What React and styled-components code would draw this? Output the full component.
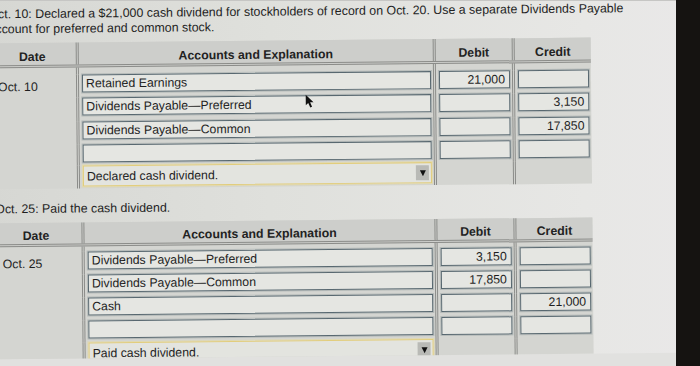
import React from "react";
import styled, { createGlobalStyle } from "styled-components";

const GlobalStyle = createGlobalStyle`
  *, *::before, *::after { box-sizing: border-box; }
  html, body { margin: 0; padding: 0; }
  body {
    background: #e0e0de;
    font-family: "Liberation Sans", Arial, sans-serif;
    color: #1f1f1f;
    overflow: hidden;
  }
`;

const Monitor = styled.div`
  display: flex;
  width: 700px;
  height: 366px;
  overflow: hidden;
`;

const Display = styled.div`
  flex: 1;
  overflow: hidden;
  background: #e1e1df;
  border-top: 1px solid #c6c6c4;
`;

const Bezel = styled.div`
  width: 24px;
  background: #151311;
`;

// the page itself, tilted a touch like the monitor
const Page = styled.div`
  position: relative;
  width: 700px;
  height: 365px;
  margin: -10px 0 0 -10px;
  padding-top: 10px;
  overflow: hidden;
  background: linear-gradient(90deg, #d6d7d3 0%, #dfe0dc 40%, #e7e7e5 85%, #e9e8e8 100%);
  transform: rotate(-0.55deg);
  transform-origin: 350px 192px;
`;

const Prompt = styled.p`
  margin: ${(p) => p.$top}px 0 0;
  padding-left: ${(p) => p.$left || 0}px;
  font-size: 12.4px;
  line-height: 15px;
  white-space: nowrap;
`;

const Journal = styled.div`
  width: 602px;
  margin-top: ${(p) => p.$top}px;
  background: #d4d5d1;
`;

const Row = styled.div`
  display: grid;
  grid-template-columns: ${(p) => p.$cols};
  height: ${(p) => p.$h}px;

  & > * + * {
    border-left: 3px double #8b8c89;
  }
`;

const HeadRow = styled(Row)`
  background: #cdcecb;
  border-bottom: 3px double #8b8c89;
`;

const HeadCell = styled.div`
  display: flex;
  align-items: center;
  justify-content: center;
  padding-top: 5px;
  font-size: 12.3px;
  font-weight: bold;
  color: #222;
`;

const Cell = styled.div`
  min-width: 0;
  padding: 0 2px 0 3px;
`;

const DateCell = styled.div`
  padding: 5px 0 0 ${(p) => p.$inset}px;
  font-size: 12.3px;
  line-height: 14px;
  white-space: nowrap;
`;

const Field = styled.div`
  height: 18px;
  padding: 0 4px 0 3px;
  border: 1px solid #586870;
  box-shadow: 0 0 0 1px rgba(110, 125, 130, 0.3);
  background: #e5e6e2;
  font-size: 12.3px;
  line-height: 16px;
  text-align: ${(p) => (p.$num ? "right" : "left")};
  white-space: nowrap;
  overflow: hidden;
`;

const Note = styled.div`
  display: flex;
  align-items: center;
  justify-content: space-between;
  height: 21px;
  padding: 0 2px 0 3px;
  border: 1px solid #e2cd7c;
  box-shadow: 0 0 0 1px rgba(240, 222, 140, 0.45);
  background: #e3e4df;
  font-size: 12.3px;
  white-space: nowrap;
`;

const Drop = styled.span`
  display: flex;
  align-items: center;
  justify-content: center;
  width: 13px;
  height: 15px;
  background: #b9bab6;

  &::after {
    content: "";
    border-left: 3.5px solid transparent;
    border-right: 3.5px solid transparent;
    border-top: 6px solid #111;
  }
`;

const Pointer = styled.svg`
  position: absolute;
  left: 316px;
  top: 103px;
  width: 9px;
  height: 14px;
`;

const sections = [
  {
    cols: "87px 357px 79px 79px",
    inset: 9,
    head: 25,
    lead: 6.5,
    pitch: 23.5,
    last: 21,
    date: "Oct. 10",
    note: "Declared cash dividend.",
    lines: [
      { account: "Retained Earnings", debit: "21,000", credit: "" },
      { account: "Dividends Payable\u2014Preferred", debit: "", credit: "3,150" },
      { account: "Dividends Payable\u2014Common", debit: "", credit: "17,850" },
      { account: "", debit: "", credit: "" },
    ],
  },
  {
    cols: "91px 353px 79px 79px",
    inset: 12,
    head: 24,
    lead: 5.5,
    pitch: 23,
    last: 22,
    date: "Oct. 25",
    note: "Paid cash dividend.",
    lines: [
      { account: "Dividends Payable\u2014Preferred", debit: "3,150", credit: "" },
      { account: "Dividends Payable\u2014Common", debit: "17,850", credit: "" },
      { account: "Cash", debit: "", credit: "21,000" },
      { account: "", debit: "", credit: "" },
    ],
  },
];

function JournalTable({ entry, top }) {
  const { cols, inset, head, lead, pitch, last, date, note, lines } = entry;
  return (
    <Journal $top={top}>
      <HeadRow $cols={cols} $h={head}>
        <HeadCell>Date</HeadCell>
        <HeadCell>Accounts and Explanation</HeadCell>
        <HeadCell>Debit</HeadCell>
        <HeadCell>Credit</HeadCell>
      </HeadRow>
      <Row $cols={cols} $h={lead}>
        <div />
        <div />
        <div />
        <div />
      </Row>
      {lines.map((line, i) => (
        <Row key={i} $cols={cols} $h={i === lines.length - 1 ? last : pitch}>
          <DateCell $inset={inset}>{i === 0 ? date : ""}</DateCell>
          <Cell>
            <Field>{line.account}</Field>
          </Cell>
          <Cell>
            <Field $num>{line.debit}</Field>
          </Cell>
          <Cell>
            <Field $num>{line.credit}</Field>
          </Cell>
        </Row>
      ))}
      <Row $cols={cols} $h={22.5}>
        <div />
        <Cell>
          <Note>
            {note}
            <Drop />
          </Note>
        </Cell>
        <div />
        <div />
      </Row>
    </Journal>
  );
}

export default function App() {
  return (
    <Monitor>
      <GlobalStyle />
      <Display>
        <Page>
          <Prompt $top={2.5}>
            Oct. 10: Declared a $21,000 cash dividend for stockholders of record on Oct. 20. Use a separate Dividends Payable
            <br />
            account for preferred and common stock.
          </Prompt>
          <JournalTable entry={sections[0]} top={6.5} />
          <Prompt $top={13} $left={5}>
            Oct. 25: Paid the cash dividend.
          </Prompt>
          <JournalTable entry={sections[1]} top={6} />
          <Pointer viewBox="0 0 9 14">
            <path d="M0.5 0.5 L0.5 11 L3 8.6 L5 13.2 L6.8 12.4 L4.9 8 L8.3 8 Z" fill="#111" />
          </Pointer>
        </Page>
      </Display>
      <Bezel />
    </Monitor>
  );
}
